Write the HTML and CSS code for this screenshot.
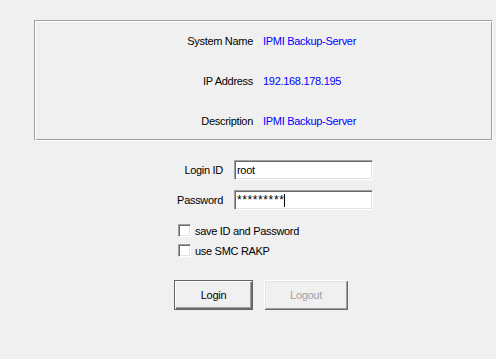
FILE: index.html
```html
<!DOCTYPE html>
<html>
<head>
<meta charset="utf-8">
<link rel="stylesheet" href="styles.css">
</head>
<body>
<div class="page">
  <div class="info">
    <div class="info-label">System Name</div><div class="info-value">IPMI Backup-Server</div>
    <div class="info-label">IP Address</div><div class="info-value">192.168.178.195</div>
    <div class="info-label">Description</div><div class="info-value">IPMI Backup-Server</div>
  </div>
  <div class="login">
    <div class="field-label">Login ID</div><div class="field"><span>root</span></div>
    <div class="field-label">Password</div><div class="field"><span class="secret">*********</span><span class="caret"></span></div>
  </div>
  <div class="checks">
    <div class="check"><span class="box"></span><span>save ID and Password</span></div>
    <div class="check"><span class="box"></span><span>use SMC RAKP</span></div>
  </div>
  <div class="buttons">
    <div class="btn btn-default">Login</div>
    <div class="btn btn-disabled">Logout</div>
  </div>
</div>
</body>
</html>
```
FILE: styles.css
```css
html, body {
  margin: 0;
  padding: 0;
  background: #f0f0f0;
}
body {
  font-family: "Liberation Sans", Arial, sans-serif;
  font-size: 11px;
  letter-spacing: -0.3px;
  color: #000;
}
.page {
  padding: 20px 0 0 34px;
  display: flex;
  flex-direction: column;
}
.info {
  width: 457px;
  height: 119px;
  border-top: 1px solid #a0a0a0;
  border-left: 1px solid #a0a0a0;
  border-right: 1px solid #fff;
  border-bottom: 1px solid #fff;
  box-shadow: inset 1px 1px 0 #fff, inset -1px -1px 0 #a0a0a0;
  box-sizing: content-box;
  display: grid;
  grid-template-columns: 218px 1fr;
  grid-template-rows: 40px 40px 39px;
  column-gap: 10px;
  align-items: center;
}
.info-label { text-align: right; }
.info-value { color: #0000ff; }
.login {
  margin-top: 19px;
  display: grid;
  grid-template-columns: 189px 139px;
  column-gap: 11px;
  row-gap: 10px;
  align-items: center;
}
.field-label { text-align: right; }
.field {
  height: 20px;
  box-sizing: border-box;
  background: #fff;
  border-top: 1px solid #a0a0a0;
  border-left: 1px solid #a0a0a0;
  border-right: 1px solid #fff;
  border-bottom: 1px solid #fff;
  box-shadow: inset 1px 1px 0 #696969, inset -1px -1px 0 #e3e3e3;
  padding: 0 1px 0 2px;
  display: flex;
  align-items: center;
}
.secret {
  font-size: 12px;
  letter-spacing: 0.6px;
}
.caret {
  width: 1px;
  height: 13px;
  background: #000;
  margin-left: 0;
}
.checks {
  margin-top: 14px;
  margin-left: 144px;
  display: flex;
  flex-direction: column;
  gap: 7px;
}
.check {
  display: flex;
  align-items: center;
  gap: 4px;
  height: 13px;
}
.box {
  width: 13px;
  height: 13px;
  box-sizing: border-box;
  background: #fff;
  border-top: 1px solid #a0a0a0;
  border-left: 1px solid #a0a0a0;
  border-right: 1px solid #fff;
  border-bottom: 1px solid #fff;
  box-shadow: inset 1px 1px 0 #696969, inset -1px -1px 0 #e3e3e3;
}
.buttons {
  margin-top: 23px;
  margin-left: 140px;
  display: flex;
  gap: 11px;
}
.btn {
  height: 30px;
  box-sizing: border-box;
  display: flex;
  align-items: center;
  justify-content: center;
}
.btn-default {
  width: 79px;
  border: 1px solid #646464;
  box-shadow: inset 1px 1px 0 #fff, inset -1px -1px 0 #696969, inset -2px -2px 0 #a0a0a0;
}
.btn-disabled {
  width: 84px;
  color: #a0a0a0;
  box-shadow: inset 1px 1px 0 #fff, inset -1px -1px 0 #696969, inset 2px 2px 0 #e3e3e3, inset -2px -2px 0 #a0a0a0;
}
```
